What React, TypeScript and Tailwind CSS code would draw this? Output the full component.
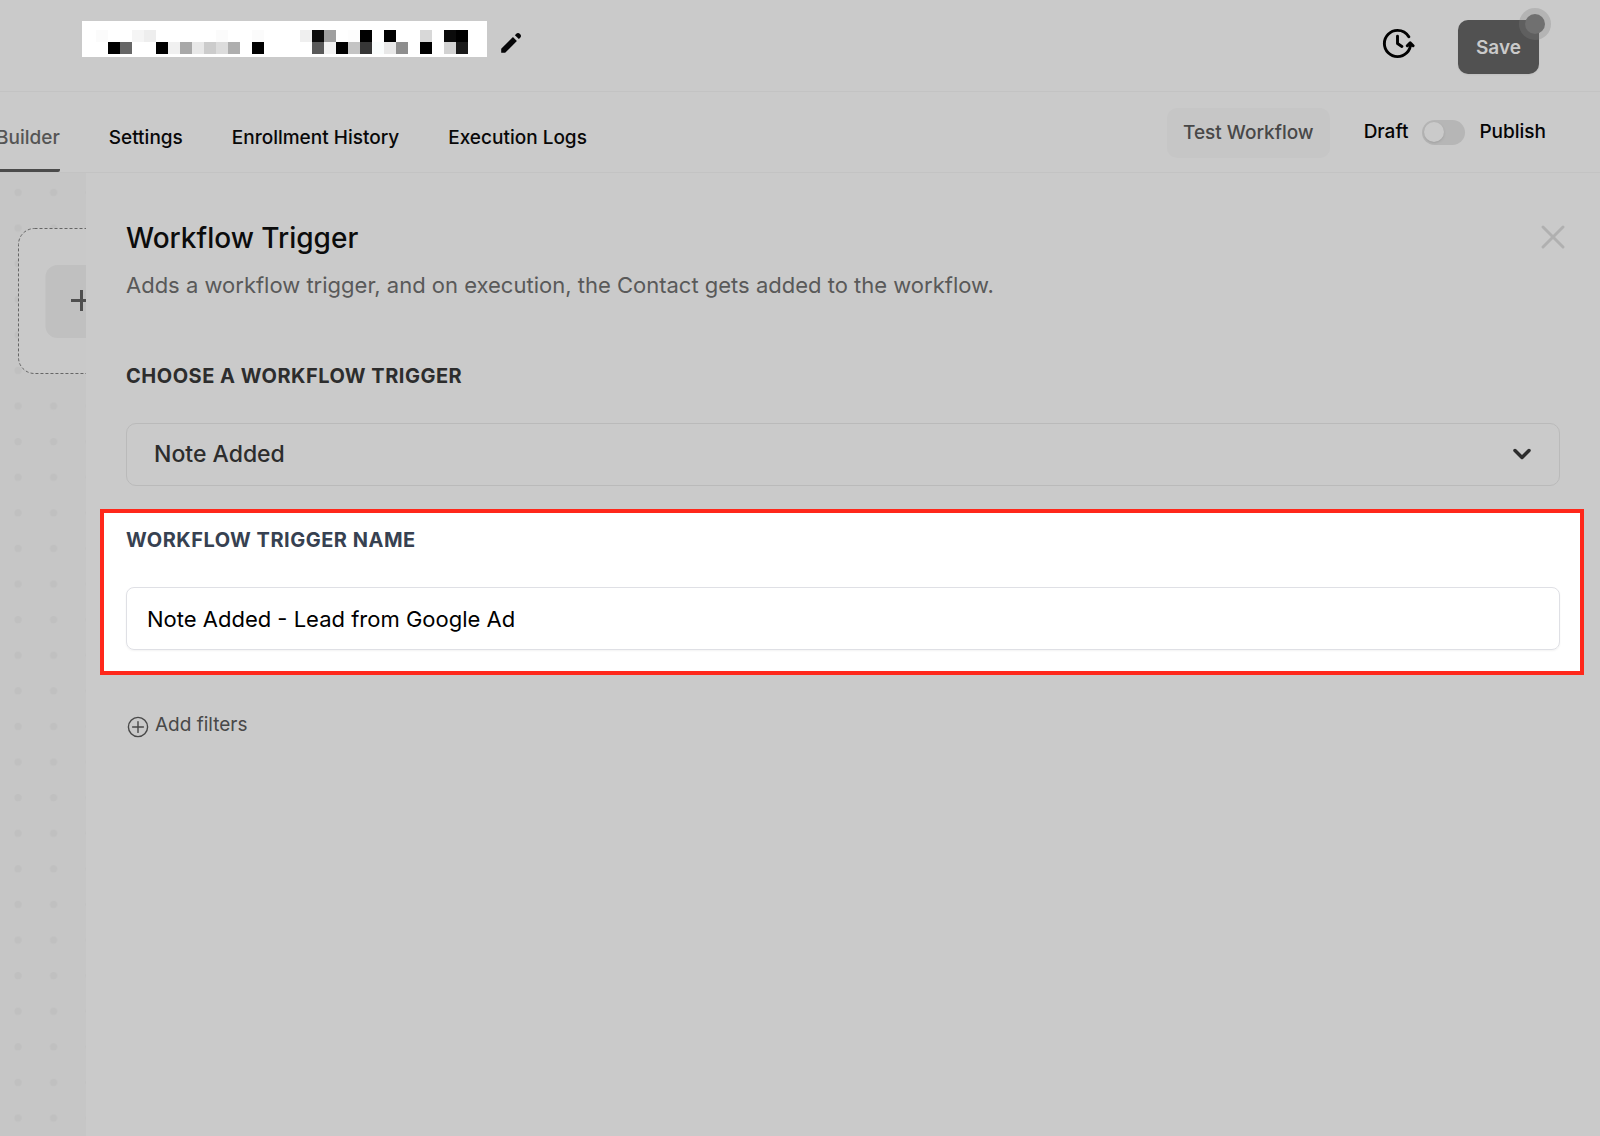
import React, { useState } from 'react';
import { ChevronDown, X } from 'lucide-react';
import { HiPencil } from 'react-icons/hi';

const TABS = ['Builder', 'Settings', 'Enrollment History', 'Execution Logs'];
const TRIGGERS = ['Note Added', 'Note Changed', 'Contact Created', 'Contact Tag'];

// [x, row, colour] of each block in the redacted workflow name
const BLOCKS: [number, number, string][] = [
  [14, 0, '#fbfbfb'], [50, 0, '#f5f5f5'], [62, 0, '#eeeeee'], [134, 0, '#fbfbfb'], [170, 0, '#fbfbfb'],
  [218, 0, '#efefef'], [230, 0, '#0b0b0b'], [242, 0, '#9f9f9f'], [266, 0, '#fdfdfd'], [278, 0, '#000000'],
  [302, 0, '#000000'], [338, 0, '#d8d8d8'], [362, 0, '#0b0b0b'], [374, 0, '#000000'],
  [26, 1, '#000000'], [38, 1, '#666666'], [74, 1, '#000000'], [86, 1, '#f0f0f0'], [98, 1, '#a8a8a8'],
  [110, 1, '#e8e8e8'], [122, 1, '#cccccc'], [134, 1, '#dcdcdc'], [146, 1, '#aeaeae'], [170, 1, '#000000'],
  [230, 1, '#595959'], [242, 1, '#f2f2f2'], [254, 1, '#000000'], [266, 1, '#c4c4c4'], [278, 1, '#363636'],
  [290, 1, '#fafdfd'], [302, 1, '#e8e8e8'], [314, 1, '#8e8e8e'], [338, 1, '#000000'], [362, 1, '#d2d2d2'],
  [374, 1, '#1a1a1a'],
];

function RedactedName() {
  return (
    <svg width="405" height="36" viewBox="0 0 405 36" shapeRendering="crispEdges" aria-hidden="true">
      <rect width="405" height="36" fill="#ffffff" />
      {BLOCKS.map(([x, row, fill]) => (
        <rect key={`${x}-${row}`} x={x} y={9 + row * 12} width="12" height="12" fill={fill} />
      ))}
    </svg>
  );
}

function HistoryIcon() {
  return (
    <svg className="h-[35px] w-[35px]" viewBox="0 0 24 24" fill="none" stroke="currentColor" strokeWidth="2" strokeLinecap="round" strokeLinejoin="round">
      <path d="M22.7 13.5L20.7 11.5L18.7 13.5M21 12C21 16.97 16.97 21 12 21C7.03 21 3 16.97 3 12C3 7.03 7.03 3 12 3C15.3 3 18.19 4.78 19.75 7.43M12 7V12L15 14" />
    </svg>
  );
}

function Header() {
  return (
    <header className="flex h-[92px] items-start justify-between border-b border-[#c3c3c3] pl-[82px] pr-[61px]">
      <div className="flex items-start gap-2.5 pt-[21px]">
        <RedactedName />
        <button type="button" aria-label="Rename workflow" className="pt-2 text-[#060608]">
          <HiPencil className="h-7 w-7" />
        </button>
      </div>
      <div className="flex items-center gap-[43px] pt-5">
        <button type="button" aria-label="Version history" className="-mt-2 text-black">
          <HistoryIcon />
        </button>
        <div className="relative">
          <button type="button" className="block h-[54px] w-[81px] rounded-[10px] bg-[#515151] pt-0.5 text-[19px] font-semibold text-[#cacaca] shadow-xs">
            Save
          </button>
          <span className="absolute -right-3 -top-3 flex h-8 w-8 items-center justify-center rounded-full bg-[#808080]/30">
            <span className="h-5 w-5 rounded-full bg-[#707070]" />
          </span>
        </div>
      </div>
    </header>
  );
}

function TabBar() {
  const [active, setActive] = useState('Builder');
  const [published, setPublished] = useState(false);

  return (
    <div className="flex h-[81px] justify-between overflow-hidden border-b border-[#c3c3c3] pr-[54px]">
      <nav className="-ml-1 flex gap-[49px]">
        {TABS.map((tab) => (
          <button
            key={tab}
            type="button"
            onClick={() => setActive(tab)}
            className={`border-b-3 pt-4 text-[19px] font-medium ${
              tab === active ? 'rounded-b-xs border-[#4b4b4b] text-[#555555]' : 'border-transparent text-[#080808]'
            }`}
          >
            {tab}
          </button>
        ))}
      </nav>
      <div className="flex items-start gap-[34px] pt-4">
        <button type="button" className="h-[50px] rounded-[10px] bg-[#c6c6c6] px-4 text-[19px] font-medium text-[#484848]">
          Test Workflow
        </button>
        <label className="flex h-12 items-center gap-3.5 text-[19px] font-medium text-[#050505]">
          Draft
          <input
            type="checkbox"
            checked={published}
            onChange={(e) => setPublished(e.target.checked)}
            className="flex h-[25px] w-[43px] appearance-none items-center rounded-full bg-[#b6b6b6] px-0.5 before:h-5 before:w-5 before:rounded-full before:bg-[#cacaca] before:shadow-sm checked:justify-end"
          />
          Publish
        </label>
      </div>
    </div>
  );
}

function Canvas() {
  return (
    <div className="relative w-[86px] shrink-0 overflow-hidden bg-[#c6c6c6]">
      <svg className="absolute inset-0 h-full w-full" aria-hidden="true">
        <defs>
          <pattern id="dots" width="35.6" height="35.6" patternUnits="userSpaceOnUse">
            <circle cx="18" cy="19.5" r="3.6" fill="#c0c0c0" />
          </pattern>
        </defs>
        <rect width="100%" height="100%" fill="url(#dots)" />
      </svg>
      <svg className="absolute inset-0" width="86" height="220" viewBox="0 0 86 220" fill="none" aria-hidden="true">
        <rect x="18.5" y="55.5" width="400" height="145" rx="16" fill="#c9c9c9" stroke="#666666" strokeDasharray="3 2" />
        <rect x="45.5" y="92" width="73" height="73" rx="12" fill="#c0c0c0" />
        <path d="M71 127.5H92M81.5 117V138" stroke="#4f4f4f" strokeWidth="3" />
      </svg>
    </div>
  );
}

function TriggerPanel() {
  const [trigger, setTrigger] = useState('Note Added');
  const [name, setName] = useState('Note Added - Lead from Google Ad');

  return (
    <main className="min-w-0 flex-1 px-10">
      <div className="flex justify-between pt-11">
        <div className="pt-0.5">
          <h1 className="text-[28px] leading-[38px] font-medium text-[#0c0c0c]">Workflow Trigger</h1>
          <p className="mt-2.5 text-[22px] leading-9 text-[#595959]">
            Adds a workflow trigger, and on execution, the Contact gets added to the workflow.
          </p>
        </div>
        <button type="button" aria-label="Close" className="-mr-[13px] h-10 w-10 text-[#b0b0b0]">
          <X className="h-10 w-10" strokeWidth={1.8} />
        </button>
      </div>

      <label htmlFor="trigger" className="mt-[59px] block text-xl leading-7 font-bold tracking-wide text-[#2d2d2d]">
        CHOOSE A WORKFLOW TRIGGER
      </label>
      <div className="relative mt-[33px]">
        <select
          id="trigger"
          value={trigger}
          onChange={(e) => setTrigger(e.target.value)}
          className="h-[63px] w-full appearance-none rounded-[10px] border border-[#bababa] px-[27px] text-[23px] font-medium text-[#2d2d2d]"
        >
          {TRIGGERS.map((t) => (
            <option key={t}>{t}</option>
          ))}
        </select>
        <ChevronDown className="pointer-events-none absolute right-6 top-[17px] h-7 w-7 text-[#2d2d2d]" strokeWidth={3} />
      </div>

      {/* Highlighted step */}
      <section className="-ml-[26px] -mr-6 mt-[23px] border-4 border-[#ff281b] bg-white pt-[13px] pr-5 pb-[21px] pl-[22px]">
        <label htmlFor="trigger-name" className="block text-xl leading-7 font-bold tracking-wide text-[#374151]">
          WORKFLOW TRIGGER NAME
        </label>
        <input
          id="trigger-name"
          type="text"
          value={name}
          onChange={(e) => setName(e.target.value)}
          className="mt-[33px] block h-[63px] w-full rounded-lg border border-[#dfe0e5] px-5 text-[22px] text-black shadow-xs"
        />
      </section>

      <button type="button" className="mt-9 ml-px flex items-center gap-1.5 text-[19px] leading-7 text-[#484848]">
        <svg className="mt-1 h-[22px] w-[22px]" viewBox="0 0 22 22" fill="none" stroke="currentColor" strokeWidth="1.4" strokeLinecap="round">
          <circle cx="11" cy="11" r="9.6" />
          <path d="M11 5.6V16.4M5.6 11H16.4" />
        </svg>
        Add filters
      </button>
    </main>
  );
}

export default function App() {
  return (
    <div className="flex min-h-screen flex-col overflow-hidden bg-[#cacaca] font-['Inter','Liberation_Sans',sans-serif]">
      <Header />
      <TabBar />
      <div className="flex flex-1">
        <Canvas />
        <TriggerPanel />
      </div>
    </div>
  );
}
